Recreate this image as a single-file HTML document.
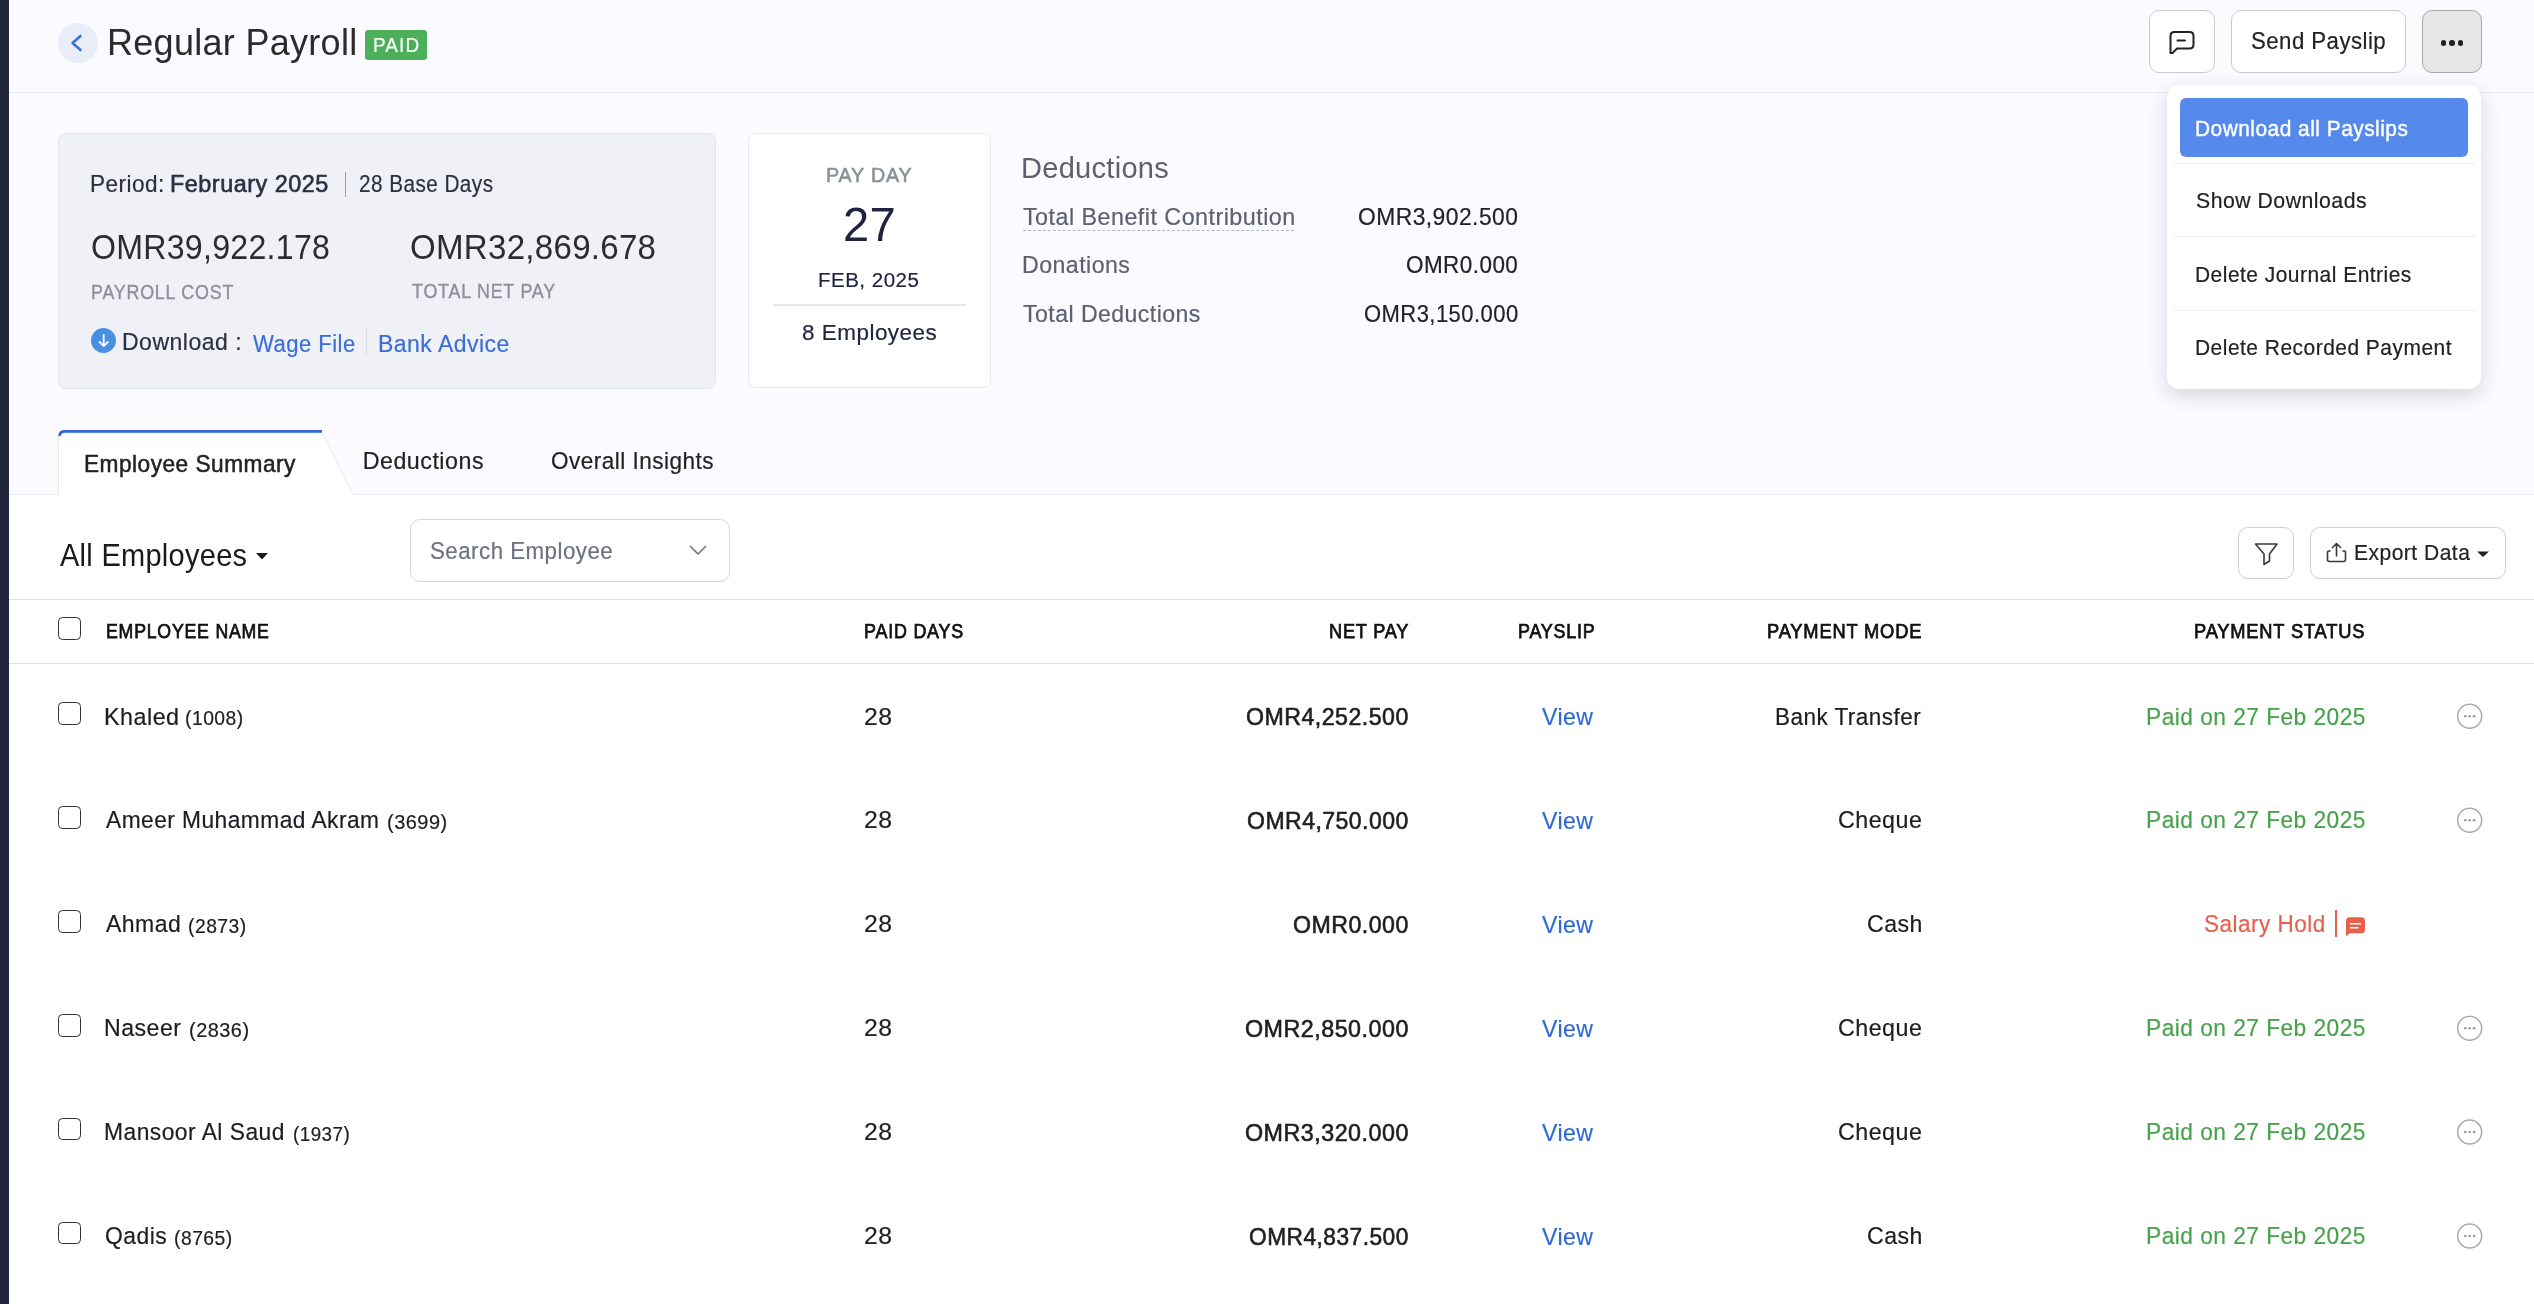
<!DOCTYPE html>
<html><head><meta charset="utf-8">
<style>
html,body{margin:0;padding:0;}
body{width:2534px;height:1304px;overflow:hidden;position:relative;background:#ffffff;font-family:"Liberation Sans",sans-serif;}
.a{position:absolute;box-sizing:border-box;}
.t{position:absolute;white-space:pre;line-height:1;transform-origin:0 0;font-family:"Liberation Sans",sans-serif;}
svg{position:absolute;overflow:visible;}
</style></head><body>
<!-- page bg top area -->
<div class="a" style="left:9px;top:0;width:2525px;height:495px;background:#fbfaff;"></div>
<div class="a" style="left:9px;top:92px;width:2525px;height:1px;background:#ebebee;"></div>
<div class="a" style="left:9px;top:494px;width:2525px;height:1px;background:#e9e9eb;"></div>
<!-- left strip -->
<div class="a" style="left:0;top:0;width:9px;height:1304px;background:#21263b;"></div>
<!-- back btn -->
<div class="a" style="left:58px;top:23px;width:40px;height:40px;border-radius:50%;background:#e8edf8;"></div>
<svg style="left:0;top:0" width="1" height="1"><polyline points="80.5,36 72.5,43 80.5,50" fill="none" stroke="#3a72d8" stroke-width="2.6" stroke-linecap="round" stroke-linejoin="round"/></svg>
<!-- PAID badge -->
<div class="a" style="left:365px;top:30px;width:62px;height:30px;border-radius:3px;background:#4caf5a;"></div>
<!-- top buttons -->
<div class="a" style="left:2149px;top:10px;width:66px;height:63px;border-radius:10px;background:#fff;border:1px solid #cbcbcb;"></div>
<svg style="left:0;top:0" width="1" height="1"><path d="M2172.5,53 L2170.5,53 L2170.5,36 Q2170.5,32 2174.5,32 L2189.5,32 Q2193.5,32 2193.5,36 L2193.5,44.5 Q2193.5,48.5 2189.5,48.5 L2177,48.5 Z" fill="none" stroke="#222" stroke-width="2" stroke-linejoin="round"/><line x1="2177.5" y1="40.5" x2="2185" y2="40.5" stroke="#222" stroke-width="2" stroke-linecap="round"/></svg>
<div class="a" style="left:2231px;top:10px;width:175px;height:63px;border-radius:10px;background:#fff;border:1px solid #cbcbcb;"></div>
<div class="a" style="left:2422px;top:10px;width:60px;height:63px;border-radius:10px;background:#e6e6e6;border:1px solid #a9a9a9;"></div>
<div class="a" style="left:2440.5px;top:40.2px;width:5.6px;height:5.6px;border-radius:50%;background:#222;"></div>
<div class="a" style="left:2449.2px;top:40.2px;width:5.6px;height:5.6px;border-radius:50%;background:#222;"></div>
<div class="a" style="left:2457.9px;top:40.2px;width:5.6px;height:5.6px;border-radius:50%;background:#222;"></div>
<!-- summary card -->
<div class="a" style="left:58px;top:133px;width:658px;height:256px;border-radius:8px;background:#f0f1f6;border:1px solid #e4e5eb;"></div>
<div class="a" style="left:345px;top:172px;width:1px;height:25px;background:#9a9ca6;"></div>
<div class="a" style="left:91px;top:328px;width:25px;height:25px;border-radius:50%;background:#4a90e2;"></div>
<svg style="left:0;top:0" width="1" height="1"><path d="M103.7,335 L103.7,346 M99.6,342 L103.7,346.2 L107.8,342" fill="none" stroke="#fff" stroke-width="1.8" stroke-linecap="round" stroke-linejoin="round"/></svg>
<div class="a" style="left:366px;top:328px;width:1px;height:27px;background:#dcdde3;"></div>
<!-- pay day card -->
<div class="a" style="left:748px;top:133px;width:243px;height:255px;border-radius:8px;background:#fff;border:1px solid #e8e8ef;"></div>
<div class="a" style="left:773px;top:304px;width:193px;height:2px;background:#e6e6eb;"></div>
<!-- deductions dotted underline -->
<div class="a" style="left:1023px;top:230px;width:271px;height:0;border-top:1px dashed #b5b8c2;"></div>
<!-- tabs -->
<svg style="left:0;top:0" width="1" height="1"><path d="M58.5,495 L58.5,439 Q58.5,433 64.5,433 L320,433 Q322.5,433 323.5,435 L353,495 Z" fill="#ffffff" stroke="#e6e7ec" stroke-width="1"/><path d="M59.6,436 Q59.6,431.4 65,431.4 L322,431.4" fill="none" stroke="#3066d6" stroke-width="2.6"/></svg>
<div class="a" style="left:59px;top:494px;width:294px;height:2px;background:#fff;"></div>
<!-- search box -->
<div class="a" style="left:410px;top:519px;width:320px;height:63px;border-radius:10px;background:#fff;border:1px solid #d6d7db;"></div>
<svg style="left:0;top:0" width="1" height="1"><polyline points="690.5,546.5 698,554 705.5,546.5" fill="none" stroke="#737985" stroke-width="1.7" stroke-linecap="round" stroke-linejoin="round"/></svg>
<!-- all employees caret -->
<svg style="left:0;top:0" width="1" height="1"><polygon points="256,553 268,553 262,559.5" fill="#1a1a1a"/></svg>
<!-- filter / export -->
<div class="a" style="left:2238px;top:527px;width:56px;height:52px;border-radius:10px;background:#fff;border:1px solid #cfcfcf;"></div>
<svg style="left:0;top:0" width="1" height="1"><path d="M2255.5,544 L2277,544 L2269.5,554 L2269.5,561 L2264,564.5 L2264,554 Z" fill="none" stroke="#3a3a3a" stroke-width="1.6" stroke-linejoin="round"/></svg>
<div class="a" style="left:2310px;top:527px;width:196px;height:52px;border-radius:10px;background:#fff;border:1px solid #cfcfcf;"></div>
<svg style="left:0;top:0" width="1" height="1"><path d="M2330,551 L2328.5,551 Q2327.5,551 2327.5,552 L2327.5,559.5 Q2327.5,561.5 2329.5,561.5 L2343.5,561.5 Q2345.5,561.5 2345.5,559.5 L2345.5,552 Q2345.5,551 2344.5,551 L2343,551 M2336.5,556 L2336.5,543.5 M2332.5,547.5 L2336.5,543.5 L2340.5,547.5" fill="none" stroke="#3a3a3a" stroke-width="1.6" stroke-linecap="round" stroke-linejoin="round"/></svg>
<svg style="left:0;top:0" width="1" height="1"><polygon points="2477,551.5 2489,551.5 2483,557" fill="#222"/></svg>
<!-- table lines -->
<div class="a" style="left:9px;top:599px;width:2525px;height:1px;background:#e0e0e3;"></div>
<div class="a" style="left:9px;top:663px;width:2525px;height:1px;background:#e0e0e3;"></div>
<div class="a" style="left:58px;top:617px;width:22.5px;height:22.5px;border-radius:4.5px;border:1.4px solid #333;background:#fff;"></div>
<div class="a" style="left:58px;top:702.1px;width:22.5px;height:22.5px;border-radius:4.5px;border:1.4px solid #333;background:#fff;"></div>
<svg style="left:0;top:0" width="1" height="1"><circle cx="2469.7" cy="716.3" r="12" fill="none" stroke="#a9a9a9" stroke-width="1.5"/><circle cx="2465.3" cy="716.3" r="1.3" fill="#999"/><circle cx="2469.7" cy="716.3" r="1.3" fill="#999"/><circle cx="2474.1" cy="716.3" r="1.3" fill="#999"/></svg>
<div class="a" style="left:58px;top:806.1px;width:22.5px;height:22.5px;border-radius:4.5px;border:1.4px solid #333;background:#fff;"></div>
<svg style="left:0;top:0" width="1" height="1"><circle cx="2469.7" cy="820.3" r="12" fill="none" stroke="#a9a9a9" stroke-width="1.5"/><circle cx="2465.3" cy="820.3" r="1.3" fill="#999"/><circle cx="2469.7" cy="820.3" r="1.3" fill="#999"/><circle cx="2474.1" cy="820.3" r="1.3" fill="#999"/></svg>
<div class="a" style="left:58px;top:910.0px;width:22.5px;height:22.5px;border-radius:4.5px;border:1.4px solid #333;background:#fff;"></div>
<div class="a" style="left:2335px;top:910.2px;width:2.2px;height:27px;background:#e8604c;"></div>
<svg style="left:0;top:0" width="1" height="1"><path d="M2346,920.8 Q2346,917.3 2349.5,917.3 L2361.5,917.3 Q2365,917.3 2365,920.8 L2365,929.8 Q2365,933.3 2361.5,933.3 L2350,933.3 L2346,936.3 Z" fill="#e8604c"/><path d="M2350,923.8 L2361,923.8 M2350,927.8 L2358.5,927.8" stroke="#fff" stroke-width="1.4"/></svg>
<div class="a" style="left:58px;top:1014.0px;width:22.5px;height:22.5px;border-radius:4.5px;border:1.4px solid #333;background:#fff;"></div>
<svg style="left:0;top:0" width="1" height="1"><circle cx="2469.7" cy="1028.2" r="12" fill="none" stroke="#a9a9a9" stroke-width="1.5"/><circle cx="2465.3" cy="1028.2" r="1.3" fill="#999"/><circle cx="2469.7" cy="1028.2" r="1.3" fill="#999"/><circle cx="2474.1" cy="1028.2" r="1.3" fill="#999"/></svg>
<div class="a" style="left:58px;top:1117.9px;width:22.5px;height:22.5px;border-radius:4.5px;border:1.4px solid #333;background:#fff;"></div>
<svg style="left:0;top:0" width="1" height="1"><circle cx="2469.7" cy="1132.1" r="12" fill="none" stroke="#a9a9a9" stroke-width="1.5"/><circle cx="2465.3" cy="1132.1" r="1.3" fill="#999"/><circle cx="2469.7" cy="1132.1" r="1.3" fill="#999"/><circle cx="2474.1" cy="1132.1" r="1.3" fill="#999"/></svg>
<div class="a" style="left:58px;top:1221.8px;width:22.5px;height:22.5px;border-radius:4.5px;border:1.4px solid #333;background:#fff;"></div>
<svg style="left:0;top:0" width="1" height="1"><circle cx="2469.7" cy="1236.0" r="12" fill="none" stroke="#a9a9a9" stroke-width="1.5"/><circle cx="2465.3" cy="1236.0" r="1.3" fill="#999"/><circle cx="2469.7" cy="1236.0" r="1.3" fill="#999"/><circle cx="2474.1" cy="1236.0" r="1.3" fill="#999"/></svg>
<!-- dropdown -->
<div class="a" style="left:2167px;top:85px;width:314px;height:304px;border-radius:12px;background:#fff;box-shadow:0 6px 20px rgba(30,30,50,0.17);"></div>
<div class="a" style="left:2180px;top:98px;width:288px;height:59px;border-radius:6px;background:#558aec;"></div>
<div class="a" style="left:2174px;top:163px;width:301px;height:1px;background:#ececef;"></div>
<div class="a" style="left:2174px;top:236px;width:301px;height:1px;background:#ececef;"></div>
<div class="a" style="left:2174px;top:310px;width:301px;height:1px;background:#ececef;"></div>

<div style="position:absolute;left:0;top:0;width:2534px;height:1304px;will-change:transform;"><span class="t" style="top:23.69px;font-size:36.99px;color:#2b2b2b;letter-spacing:0.3px;transform:scaleX(0.9734);left:107.07px;">Regular Payroll</span>
<span class="t" style="top:34.85px;font-size:20.61px;color:#ffffff;letter-spacing:1.2px;transform:scaleX(0.9205);-webkit-text-stroke:0.2px #ffffff;left:372.58px;">PAID</span>
<span class="t" style="top:29.42px;font-size:24.31px;color:#222222;letter-spacing:0.5px;transform:scaleX(0.9144);-webkit-text-stroke:0.2px #222222;left:2251.00px;">Send Payslip</span>
<span class="t" style="top:118.16px;font-size:21.67px;color:#ffffff;letter-spacing:0.5px;transform:scaleX(0.9650);-webkit-text-stroke:0.4px #ffffff;left:2195.43px;">Download all Payslips</span>
<span class="t" style="top:190.16px;font-size:21.67px;color:#222222;letter-spacing:0.5px;transform:scaleX(0.9814);-webkit-text-stroke:0.2px #222222;left:2196.04px;">Show Downloads</span>
<span class="t" style="top:263.66px;font-size:21.67px;color:#222222;letter-spacing:0.5px;transform:scaleX(0.9675);-webkit-text-stroke:0.2px #222222;left:2195.33px;">Delete Journal Entries</span>
<span class="t" style="top:336.66px;font-size:21.67px;color:#222222;letter-spacing:0.5px;transform:scaleX(0.9679);-webkit-text-stroke:0.2px #222222;left:2195.33px;">Delete Recorded Payment</span>
<span class="t" style="top:173.32px;font-size:23.25px;color:#2a3042;letter-spacing:0.5px;transform:scaleX(0.9697);-webkit-text-stroke:0.2px #2a3042;left:90.16px;">Period:</span>
<span class="t" style="top:173.32px;font-size:23.25px;color:#2a3042;letter-spacing:0.5px;transform:scaleX(1.0074);-webkit-text-stroke:0.6px #2a3042;left:170.29px;">February 2025</span>
<span class="t" style="top:173.32px;font-size:23.25px;color:#2a3042;letter-spacing:0.5px;transform:scaleX(0.8919);-webkit-text-stroke:0.2px #2a3042;left:358.57px;">28 Base Days</span>
<span class="t" style="top:230.27px;font-size:34.88px;color:#2d2d2d;letter-spacing:0.3px;transform:scaleX(0.9206);left:90.51px;">OMR39,922.178</span>
<span class="t" style="top:230.47px;font-size:34.88px;color:#2d2d2d;letter-spacing:0.3px;transform:scaleX(0.9479);left:410.46px;">OMR32,869.678</span>
<span class="t" style="top:281.55px;font-size:20.61px;color:#8b8f99;letter-spacing:0.9px;transform:scaleX(0.8674);-webkit-text-stroke:0.35px #8b8f99;left:90.73px;">PAYROLL COST</span>
<span class="t" style="top:281.15px;font-size:20.61px;color:#8b8f99;letter-spacing:0.9px;transform:scaleX(0.8675);-webkit-text-stroke:0.35px #8b8f99;left:411.81px;">TOTAL NET PAY</span>
<span class="t" style="top:330.92px;font-size:23.25px;color:#2a3042;letter-spacing:0.5px;transform:scaleX(0.9902);-webkit-text-stroke:0.2px #2a3042;left:122.12px;">Download :</span>
<span class="t" style="top:331.97px;font-size:24.84px;color:#3a6fd8;letter-spacing:0.5px;transform:scaleX(0.8899);-webkit-text-stroke:0.2px #3a6fd8;left:252.95px;">Wage File</span>
<span class="t" style="top:331.97px;font-size:24.84px;color:#3a6fd8;letter-spacing:0.5px;transform:scaleX(0.9272);-webkit-text-stroke:0.2px #3a6fd8;left:378.32px;">Bank Advice</span>
<span class="t" style="top:164.55px;font-size:20.61px;color:#8b8f99;letter-spacing:0.9px;transform:scaleX(0.9537);-webkit-text-stroke:0.6px #8b8f99;left:825.72px;">PAY DAY</span>
<span class="t" style="top:200.04px;font-size:48.62px;color:#1e2340;letter-spacing:0.3px;transform:scaleX(0.9687);left:843.29px;">27</span>
<span class="t" style="top:268.60px;font-size:21.14px;color:#1e2340;letter-spacing:0.5px;transform:scaleX(0.9715);-webkit-text-stroke:0.2px #1e2340;left:818.23px;">FEB, 2025</span>
<span class="t" style="top:321.71px;font-size:22.2px;color:#1e2340;letter-spacing:0.5px;transform:scaleX(1.0114);-webkit-text-stroke:0.2px #1e2340;left:801.54px;">8 Employees</span>
<span class="t" style="top:153.34px;font-size:29.6px;color:#5c6070;letter-spacing:0.3px;transform:scaleX(0.9803);left:1021.15px;">Deductions</span>
<span class="t" style="top:205.42px;font-size:24.31px;color:#5c6070;letter-spacing:0.5px;transform:scaleX(0.9585);-webkit-text-stroke:0.2px #5c6070;left:1023.17px;">Total Benefit Contribution</span>
<span class="t" style="top:253.12px;font-size:24.31px;color:#5c6070;letter-spacing:0.5px;transform:scaleX(0.9509);-webkit-text-stroke:0.2px #5c6070;left:1021.75px;">Donations</span>
<span class="t" style="top:301.62px;font-size:24.31px;color:#5c6070;letter-spacing:0.5px;transform:scaleX(0.9479);-webkit-text-stroke:0.2px #5c6070;left:1023.18px;">Total Deductions</span>
<span class="t" style="top:205.42px;font-size:24.31px;color:#222222;letter-spacing:0.5px;transform:scaleX(0.9392);-webkit-text-stroke:0.2px #222222;left:1357.78px;">OMR3,902.500</span>
<span class="t" style="top:253.12px;font-size:24.31px;color:#222222;letter-spacing:0.5px;transform:scaleX(0.9245);-webkit-text-stroke:0.2px #222222;left:1405.79px;">OMR0.000</span>
<span class="t" style="top:301.62px;font-size:24.31px;color:#222222;letter-spacing:0.5px;transform:scaleX(0.9053);-webkit-text-stroke:0.2px #222222;left:1363.51px;">OMR3,150.000</span>
<span class="t" style="top:453.12px;font-size:23.25px;color:#222222;letter-spacing:0.5px;transform:scaleX(0.9751);-webkit-text-stroke:0.5px #222222;left:83.99px;">Employee Summary</span>
<span class="t" style="top:450.32px;font-size:23.25px;color:#222222;letter-spacing:0.5px;-webkit-text-stroke:0.2px #222222;left:362.70px;">Deductions</span>
<span class="t" style="top:450.32px;font-size:23.25px;color:#222222;letter-spacing:0.5px;transform:scaleX(0.9693);-webkit-text-stroke:0.2px #222222;left:551.03px;">Overall Insights</span>
<span class="t" style="top:540.35px;font-size:30.65px;color:#1a1a1a;letter-spacing:0.3px;transform:scaleX(0.9461);left:59.91px;">All Employees</span>
<span class="t" style="top:539.42px;font-size:24.31px;color:#6b7280;letter-spacing:0.5px;transform:scaleX(0.9190);-webkit-text-stroke:0.2px #6b7280;left:430.00px;">Search Employee</span>
<span class="t" style="top:541.51px;font-size:22.2px;color:#222222;letter-spacing:0.5px;transform:scaleX(0.9486);-webkit-text-stroke:0.2px #222222;left:2353.89px;">Export Data</span>
<span class="t" style="top:621.30px;font-size:20.08px;color:#111111;letter-spacing:0.9px;transform:scaleX(0.8812);-webkit-text-stroke:0.75px #111111;left:105.56px;">EMPLOYEE NAME</span>
<span class="t" style="top:621.30px;font-size:20.08px;color:#111111;letter-spacing:0.9px;transform:scaleX(0.8908);-webkit-text-stroke:0.75px #111111;left:863.85px;">PAID DAYS</span>
<span class="t" style="top:621.30px;font-size:20.08px;color:#111111;letter-spacing:0.9px;transform:scaleX(0.9033);-webkit-text-stroke:0.75px #111111;left:1328.83px;">NET PAY</span>
<span class="t" style="top:621.30px;font-size:20.08px;color:#111111;letter-spacing:0.9px;transform:scaleX(0.8913);-webkit-text-stroke:0.75px #111111;left:1517.85px;">PAYSLIP</span>
<span class="t" style="top:621.30px;font-size:20.08px;color:#111111;letter-spacing:0.9px;transform:scaleX(0.9113);-webkit-text-stroke:0.75px #111111;left:1766.82px;">PAYMENT MODE</span>
<span class="t" style="top:621.30px;font-size:20.08px;color:#111111;letter-spacing:0.9px;transform:scaleX(0.9101);-webkit-text-stroke:0.75px #111111;left:2193.82px;">PAYMENT STATUS</span>
<span class="t" style="top:704.52px;font-size:24.31px;color:#1b1d22;letter-spacing:0.5px;transform:scaleX(0.9606);-webkit-text-stroke:0.2px #1b1d22;left:104.23px;">Khaled</span>
<span class="t" style="top:708.10px;font-size:20.08px;color:#1b1d22;letter-spacing:0.5px;transform:scaleX(0.9615);-webkit-text-stroke:0.2px #1b1d22;left:185.37px;">(1008)</span>
<span class="t" style="top:704.52px;font-size:24.31px;color:#222222;letter-spacing:0.5px;transform:scaleX(1.0216);-webkit-text-stroke:0.2px #222222;left:863.89px;">28</span>
<span class="t" style="top:705.12px;font-size:24.31px;color:#1f1f1f;letter-spacing:0.5px;transform:scaleX(0.9535);-webkit-text-stroke:0.6px #1f1f1f;left:1246.15px;">OMR4,252.500</span>
<span class="t" style="top:705.02px;font-size:24.31px;color:#2f6ad6;letter-spacing:0.5px;transform:scaleX(0.9497);-webkit-text-stroke:0.2px #2f6ad6;left:1541.91px;">View</span>
<span class="t" style="top:704.52px;font-size:24.31px;color:#1b1d22;letter-spacing:0.5px;transform:scaleX(0.9268);-webkit-text-stroke:0.2px #1b1d22;left:1774.99px;">Bank Transfer</span>
<span class="t" style="top:704.52px;font-size:24.31px;color:#47a34b;letter-spacing:0.5px;transform:scaleX(0.9355);-webkit-text-stroke:0.2px #47a34b;left:2146.28px;">Paid on 27 Feb 2025</span>
<span class="t" style="top:808.47px;font-size:24.31px;color:#1b1d22;letter-spacing:0.5px;transform:scaleX(0.9359);-webkit-text-stroke:0.2px #1b1d22;left:105.92px;">Ameer Muhammad Akram</span>
<span class="t" style="top:812.05px;font-size:20.08px;color:#1b1d22;letter-spacing:0.5px;transform:scaleX(0.9940);-webkit-text-stroke:0.2px #1b1d22;left:387.24px;">(3699)</span>
<span class="t" style="top:808.47px;font-size:24.31px;color:#222222;letter-spacing:0.5px;transform:scaleX(1.0216);-webkit-text-stroke:0.2px #222222;left:863.89px;">28</span>
<span class="t" style="top:809.07px;font-size:24.31px;color:#1f1f1f;letter-spacing:0.5px;transform:scaleX(0.9476);-webkit-text-stroke:0.6px #1f1f1f;left:1247.16px;">OMR4,750.000</span>
<span class="t" style="top:808.97px;font-size:24.31px;color:#2f6ad6;letter-spacing:0.5px;transform:scaleX(0.9497);-webkit-text-stroke:0.2px #2f6ad6;left:1541.91px;">View</span>
<span class="t" style="top:808.47px;font-size:24.31px;color:#1b1d22;letter-spacing:0.5px;transform:scaleX(0.9568);-webkit-text-stroke:0.2px #1b1d22;left:1837.96px;">Cheque</span>
<span class="t" style="top:808.47px;font-size:24.31px;color:#47a34b;letter-spacing:0.5px;transform:scaleX(0.9355);-webkit-text-stroke:0.2px #47a34b;left:2146.28px;">Paid on 27 Feb 2025</span>
<span class="t" style="top:912.42px;font-size:24.31px;color:#1b1d22;letter-spacing:0.5px;transform:scaleX(0.9477);-webkit-text-stroke:0.2px #1b1d22;left:105.91px;">Ahmad</span>
<span class="t" style="top:916.00px;font-size:20.08px;color:#1b1d22;letter-spacing:0.5px;transform:scaleX(0.9615);-webkit-text-stroke:0.2px #1b1d22;left:187.77px;">(2873)</span>
<span class="t" style="top:912.42px;font-size:24.31px;color:#222222;letter-spacing:0.5px;transform:scaleX(1.0216);-webkit-text-stroke:0.2px #222222;left:863.89px;">28</span>
<span class="t" style="top:913.02px;font-size:24.31px;color:#1f1f1f;letter-spacing:0.5px;transform:scaleX(0.9532);-webkit-text-stroke:0.6px #1f1f1f;left:1293.15px;">OMR0.000</span>
<span class="t" style="top:912.92px;font-size:24.31px;color:#2f6ad6;letter-spacing:0.5px;transform:scaleX(0.9497);-webkit-text-stroke:0.2px #2f6ad6;left:1541.91px;">View</span>
<span class="t" style="top:912.42px;font-size:24.31px;color:#1b1d22;letter-spacing:0.5px;transform:scaleX(0.9515);-webkit-text-stroke:0.2px #1b1d22;left:1866.96px;">Cash</span>
<span class="t" style="top:911.92px;font-size:24.31px;color:#e8604c;letter-spacing:0.5px;transform:scaleX(0.9282);-webkit-text-stroke:0.2px #e8604c;left:2204.49px;">Salary Hold</span>
<span class="t" style="top:1016.37px;font-size:24.31px;color:#1b1d22;letter-spacing:0.5px;transform:scaleX(0.9530);-webkit-text-stroke:0.2px #1b1d22;left:104.25px;">Naseer</span>
<span class="t" style="top:1019.95px;font-size:20.08px;color:#1b1d22;letter-spacing:0.5px;transform:scaleX(0.9923);-webkit-text-stroke:0.2px #1b1d22;left:188.74px;">(2836)</span>
<span class="t" style="top:1016.37px;font-size:24.31px;color:#222222;letter-spacing:0.5px;transform:scaleX(1.0216);-webkit-text-stroke:0.2px #222222;left:863.89px;">28</span>
<span class="t" style="top:1016.97px;font-size:24.31px;color:#1f1f1f;letter-spacing:0.5px;transform:scaleX(0.9594);-webkit-text-stroke:0.6px #1f1f1f;left:1245.15px;">OMR2,850.000</span>
<span class="t" style="top:1016.87px;font-size:24.31px;color:#2f6ad6;letter-spacing:0.5px;transform:scaleX(0.9497);-webkit-text-stroke:0.2px #2f6ad6;left:1541.91px;">View</span>
<span class="t" style="top:1016.37px;font-size:24.31px;color:#1b1d22;letter-spacing:0.5px;transform:scaleX(0.9568);-webkit-text-stroke:0.2px #1b1d22;left:1837.96px;">Cheque</span>
<span class="t" style="top:1016.37px;font-size:24.31px;color:#47a34b;letter-spacing:0.5px;transform:scaleX(0.9355);-webkit-text-stroke:0.2px #47a34b;left:2146.28px;">Paid on 27 Feb 2025</span>
<span class="t" style="top:1120.32px;font-size:24.31px;color:#1b1d22;letter-spacing:0.5px;transform:scaleX(0.9395);-webkit-text-stroke:0.2px #1b1d22;left:104.27px;">Mansoor Al Saud</span>
<span class="t" style="top:1123.90px;font-size:20.08px;color:#1b1d22;letter-spacing:0.5px;transform:scaleX(0.9358);-webkit-text-stroke:0.2px #1b1d22;left:292.60px;">(1937)</span>
<span class="t" style="top:1120.32px;font-size:24.31px;color:#222222;letter-spacing:0.5px;transform:scaleX(1.0216);-webkit-text-stroke:0.2px #222222;left:863.89px;">28</span>
<span class="t" style="top:1120.92px;font-size:24.31px;color:#1f1f1f;letter-spacing:0.5px;transform:scaleX(0.9594);-webkit-text-stroke:0.6px #1f1f1f;left:1245.15px;">OMR3,320.000</span>
<span class="t" style="top:1120.82px;font-size:24.31px;color:#2f6ad6;letter-spacing:0.5px;transform:scaleX(0.9497);-webkit-text-stroke:0.2px #2f6ad6;left:1541.91px;">View</span>
<span class="t" style="top:1120.32px;font-size:24.31px;color:#1b1d22;letter-spacing:0.5px;transform:scaleX(0.9568);-webkit-text-stroke:0.2px #1b1d22;left:1837.96px;">Cheque</span>
<span class="t" style="top:1120.32px;font-size:24.31px;color:#47a34b;letter-spacing:0.5px;transform:scaleX(0.9355);-webkit-text-stroke:0.2px #47a34b;left:2146.28px;">Paid on 27 Feb 2025</span>
<span class="t" style="top:1224.27px;font-size:24.31px;color:#1b1d22;letter-spacing:0.5px;transform:scaleX(0.9419);-webkit-text-stroke:0.2px #1b1d22;left:104.97px;">Qadis</span>
<span class="t" style="top:1227.85px;font-size:20.08px;color:#1b1d22;letter-spacing:0.5px;transform:scaleX(0.9615);-webkit-text-stroke:0.2px #1b1d22;left:174.37px;">(8765)</span>
<span class="t" style="top:1224.27px;font-size:24.31px;color:#222222;letter-spacing:0.5px;transform:scaleX(1.0216);-webkit-text-stroke:0.2px #222222;left:863.89px;">28</span>
<span class="t" style="top:1224.87px;font-size:24.31px;color:#1f1f1f;letter-spacing:0.5px;transform:scaleX(0.9357);-webkit-text-stroke:0.6px #1f1f1f;left:1249.17px;">OMR4,837.500</span>
<span class="t" style="top:1224.77px;font-size:24.31px;color:#2f6ad6;letter-spacing:0.5px;transform:scaleX(0.9497);-webkit-text-stroke:0.2px #2f6ad6;left:1541.91px;">View</span>
<span class="t" style="top:1224.27px;font-size:24.31px;color:#1b1d22;letter-spacing:0.5px;transform:scaleX(0.9515);-webkit-text-stroke:0.2px #1b1d22;left:1866.96px;">Cash</span>
<span class="t" style="top:1224.27px;font-size:24.31px;color:#47a34b;letter-spacing:0.5px;transform:scaleX(0.9355);-webkit-text-stroke:0.2px #47a34b;left:2146.28px;">Paid on 27 Feb 2025</span></div>
</body></html>
